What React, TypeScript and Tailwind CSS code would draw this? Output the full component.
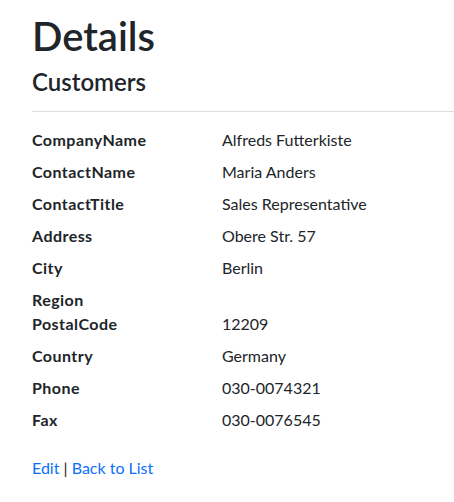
import React from "react";

const rows: [string, string][] = [
  ["CompanyName", "Alfreds Futterkiste"],
  ["ContactName", "Maria Anders"],
  ["ContactTitle", "Sales Representative"],
  ["Address", "Obere Str. 57"],
  ["City", "Berlin"],
  ["Region", ""],
  ["PostalCode", "12209"],
  ["Country", "Germany"],
  ["Phone", "030-0074321"],
  ["Fax", "030-0076545"],
];

export default function App() {
  return (
    <div className="min-h-[502px] bg-white text-[16px] leading-6 text-[#212529]" style={{ fontFamily: "Lato, 'Liberation Sans', sans-serif" }}>
      <div className="h-0 shadow-[0_0.25rem_0.75rem_rgba(0,0,0,0.05)]" />
      <main className="pl-8 pt-[12px]">
        <h1 className="mb-2 text-[40px] font-semibold leading-[48px]">Details</h1>
        <div>
          <h4 className="mb-2 text-[24px] font-semibold leading-[27px]">Customers</h4>
          <hr className="my-4 border-t border-[#dedede]" />
          <dl className="mb-4">
            {rows.map(([k, v]) => (
              <div key={k} className="flex">
                <dt className="w-[190px] shrink-0 font-bold tracking-[0.45px]">{k}</dt>
                <dd className={v ? "mb-2" : "mb-0"}>{v}</dd>
              </div>
            ))}
          </dl>
        </div>
        <p>
          <a href="#" className="text-[#0d6efd]">Edit</a> |{" "}
          <a href="#" className="text-[#0d6efd]">Back to List</a>
        </p>
      </main>
    </div>
  );
}
